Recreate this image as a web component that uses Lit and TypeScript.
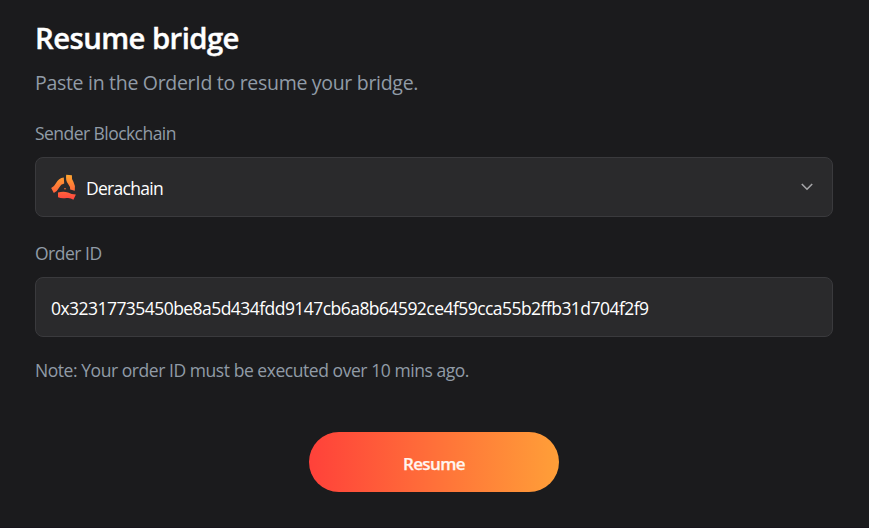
import { LitElement, html, css } from "lit";
import { customElement, state } from "lit/decorators.js";

@customElement("app-root")
export class AppRoot extends LitElement {
  @state() private chain = "Derachain";
  @state() private orderId =
    "0x32317735450be8a5d434fdd9147cb6a8b64592ce4f59cca55b2ffb31d704f2f9";

  static styles = css`
    :host {
      display: block;
      box-sizing: border-box;
      height: 528px;
      overflow: hidden;
      padding: 18px 36px 0 35px;
      background: #1b1b1d;
      border-bottom: 1px solid #18151c;
      color: #fff;
      font-family: "Segoe UI", "Open Sans", sans-serif;
      font-size: 17.5px;
    }
    h1, p { margin: 0; white-space: nowrap; }
    h1 {
      font-size: 29.3px;
      line-height: 40px;
      font-weight: 600;
      letter-spacing: -0.57px;
      -webkit-text-stroke: 0.4px currentColor;
    }
    .sub { margin-top: 10px; font-size: 19.5px; line-height: 30px; color: #919ba7; letter-spacing: -0.3px; }
    .label { display: block; width: max-content; line-height: 24px; color: #919ba7; letter-spacing: -0.55px; }
    .chain-label { margin-top: 23px; }
    .order-label { margin-top: 24px; letter-spacing: -0.5px; }
    .field {
      display: flex;
      align-items: center;
      box-sizing: border-box;
      width: 798px;
      height: 60px;
      margin-top: 12px;
      padding: 2px 18px 0 15px;
      border: 1px solid #3a3a3d;
      border-radius: 8px;
      background: #2a2a2c;
    }
    .logo { width: 26px; height: 26px; margin: -2px 9px 0 0; }
    .name { flex: none; letter-spacing: -0.7px; }
    .chevron { width: 14px; height: 10px; margin: -2px 0 0 auto; }
    .order { letter-spacing: -0.545px; }
    .note { margin-top: 21px; line-height: 24px; color: #919ba7; letter-spacing: -0.445px; }
    .resume {
      display: block;
      width: 250px;
      height: 60px;
      margin: 50px auto 0;
      padding: 3px 0 0;
      border: 0;
      border-radius: 30px;
      background: linear-gradient(90deg, #ff413a, #ff9f38);
      color: #fff5ef;
      font: 600 17px "Segoe UI", "Open Sans", sans-serif;
      letter-spacing: -0.6px;
      -webkit-text-stroke: 0.25px currentColor;
    }
  `;

  render() {
    return html`
      <h1><span>Resume bridge</span></h1>
      <p class="sub"><span>Paste in the OrderId to resume your bridge.</span></p>
      <span class="label chain-label">Sender Blockchain</span>
      <div class="field">
        <svg class="logo" viewBox="0 0 26 26">
          <defs>
            <linearGradient id="flame" gradientUnits="userSpaceOnUse" x1="0" y1="0" x2="0" y2="26">
              <stop offset="0" stop-color="#ffa92f" />
              <stop offset="1" stop-color="#ff4340" />
            </linearGradient>
          </defs>
          <g fill="url(#flame)">
            <path d="M15.2 0.7 L20.9 1.2 Q20.4 4.8 22.4 7.8 Q24.8 12 23.8 16.8 L19.2 15.6 Q19.2 12.4 17 9.8 Q14.4 6.5 15.2 0.7Z" />
            <path d="M12.8 3.6 L13.2 9.6 Q9.8 10.2 8.2 13.6 Q6.4 17.4 2.8 19 L0.2 14 Q3.4 12.4 4.9 9.2 Q7.6 4.2 12.8 3.6Z" />
            <path d="M7 18.6 Q12 16.9 17 18.4 Q20.5 20.5 24.9 20.5 L22.4 25.8 Q19.4 23.4 15.5 24 Q10.4 24.8 7 23.2Z" />
            <circle cx="14" cy="14.8" r="0.8" />
          </g>
        </svg>
        <span class="name">${this.chain}</span>
        <svg class="chevron" viewBox="0 0 14 10">
          <path d="M1.8 2 L7 7.2 L12.2 2" fill="none" stroke="#a5a5a8" stroke-width="1.6" />
        </svg>
      </div>
      <span class="label order-label">Order ID</span>
      <div class="field"><span class="order">${this.orderId}</span></div>
      <p class="note"><span>Note: Your order ID must be executed over 10 mins ago.</span></p>
      <button class="resume"><span>Resume</span></button>
    `;
  }
}
